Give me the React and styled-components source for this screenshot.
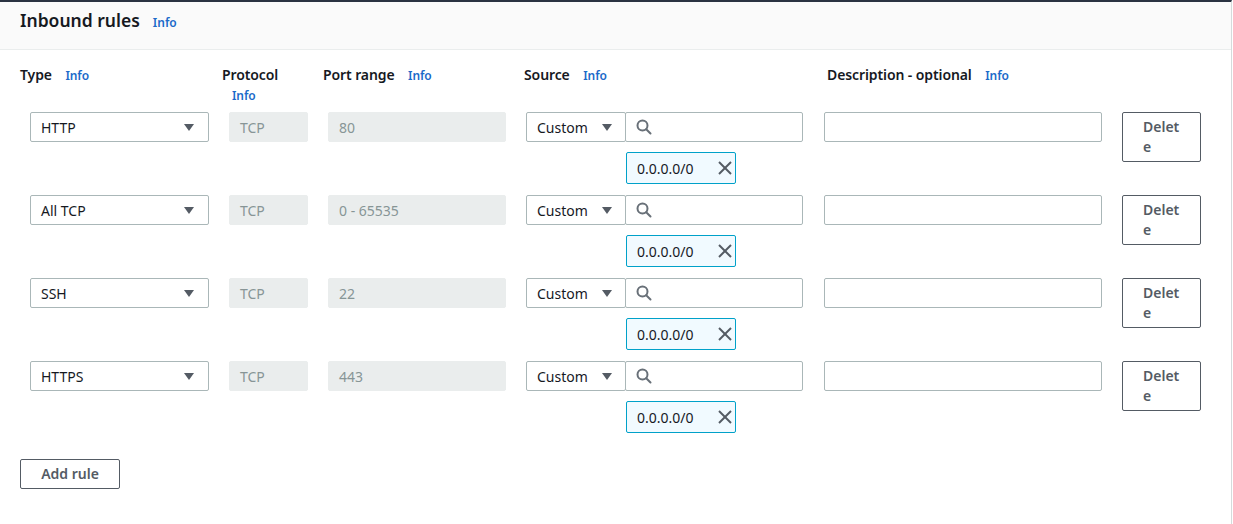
import React from "react";
import styled, { createGlobalStyle } from "styled-components";

const Global = createGlobalStyle`
  html, body { margin: 0; padding: 0; background: #fff; }
  body { font-family: "Noto Sans", "Open Sans", Arial, sans-serif; color: #16191f; }
  * { box-sizing: border-box; }
`;

const Card = styled.div`
  width: 1232px;
  min-height: 524px;
  border-top: 2px solid #2a3341;
  border-right: 1px solid #d5dbdb;
  background: #fff;
`;

const Header = styled.div`
  height: 48px;
  padding: 7px 20px 0;
  background: #fafafa;
  border-bottom: 1px solid #eaeded;
  display: flex;
  align-items: baseline;
`;

const Title = styled.h2`
  margin: 0;
  font-size: 17.5px;
  line-height: 22px;
  font-weight: 600;
  color: #16191f;
`;

const Info = styled.a`
  font-size: 12px;
  font-weight: 600;
  color: #1b6ac9;
  text-decoration: none;
  margin-left: ${(p) => p.$ml || 10}px;
`;

const Body = styled.div`
  padding: 15px 20px 0;
`;

const Grid = styled.div`
  display: grid;
  grid-template-columns: 202px 101px 201px 300px 298px 79px;
  align-items: start;
`;

const HeadRow = styled(Grid)`
  margin-bottom: 6px;
`;

const Label = styled.div`
  font-size: 14px;
  font-weight: 600;
  line-height: 20px;
  letter-spacing: -0.1px;
  padding-right: 20px;
  padding-left: ${(p) => p.$pl || 0}px;
`;

const RuleRow = styled(Grid)`
  margin-bottom: 11px;
`;

const Field = styled.div`
  height: 30px;
  width: ${(p) => p.$w}px;
  margin-left: ${(p) => p.$ml || 0}px;
  display: flex;
  align-items: center;
  padding: 0 10px;
  font-size: 14px;
  border-radius: 2px;
  border: 1px solid ${(p) => (p.$disabled ? "#eaeded" : "#aab7b8")};
  background: ${(p) => (p.$disabled ? "#eaeded" : "#fff")};
  color: ${(p) => (p.$disabled ? "#879596" : "#16191f")};
`;

const SelectBox = styled(Field)`
  justify-content: space-between;
  padding-right: ${(p) => p.$pr || 12}px;
`;

const SourceCell = styled.div`
  margin-left: 2px;
  display: flex;
  flex-direction: column;
`;

const SourceLine = styled.div`
  display: flex;
`;

const Token = styled.div`
  margin: 10px 0 0 100px;
  width: 110px;
  height: 32px;
  border: 1px solid #00a1c9;
  background: #f1faff;
  border-radius: 2px;
  display: flex;
  align-items: center;
  justify-content: space-between;
  padding: 0 2px 0 10px;
  font-size: 14px;
  color: #16191f;
`;

const Button = styled.button`
  font-family: inherit;
  font-size: 14px;
  font-weight: 600;
  line-height: 20px;
  color: #545b64;
  background: #fff;
  border: 1px solid #545b64;
  border-radius: 2px;
  padding: 4px 18px 4px 20px;
  text-align: left;
  overflow-wrap: break-word;
  word-break: break-all;
  width: ${(p) => p.$w}px;
  cursor: pointer;
`;

const AddButton = styled(Button)`
  height: 30px;
  padding: 0;
  text-align: center;
  margin-top: 15px;
`;

const Caret = () => (
  <svg width="10" height="7" viewBox="0 0 10 7">
    <polygon points="0,0 10,0 5,7" fill="#545b64" />
  </svg>
);

const SearchIcon = () => (
  <svg width="16" height="16" viewBox="0 0 16 16" fill="none" stroke="#687078" strokeWidth="2">
    <circle cx="6.5" cy="6.5" r="5" />
    <line x1="10.2" y1="10.2" x2="14.5" y2="14.5" strokeLinecap="round" />
  </svg>
);

const CloseIcon = () => (
  <svg width="16" height="16" viewBox="0 0 16 16" fill="none" stroke="#545b64" strokeWidth="2">
    <line x1="2" y1="2" x2="14" y2="14" />
    <line x1="14" y1="2" x2="2" y2="14" />
  </svg>
);

const rules = [
  { type: "HTTP", port: "80" },
  { type: "All TCP", port: "0 - 65535" },
  { type: "SSH", port: "22" },
  { type: "HTTPS", port: "443" },
];

export default function App() {
  return (
    <>
      <Global />
      <Card>
        <Header>
          <Title>Inbound rules</Title>
          <Info $ml={13}>Info</Info>
        </Header>
        <Body>
          <HeadRow>
            <Label>Type <Info>Info</Info></Label>
            <Label>Protocol <Info>Info</Info></Label>
            <Label>Port range <Info>Info</Info></Label>
            <Label>Source <Info>Info</Info></Label>
            <Label $pl={3}>Description - optional <Info>Info</Info></Label>
            <div />
          </HeadRow>
          {rules.map((r) => (
            <RuleRow key={r.type}>
              <SelectBox $w={179} $ml={10} $pr={14}>
                <span>{r.type}</span>
                <Caret />
              </SelectBox>
              <Field $w={79} $ml={7} $disabled>TCP</Field>
              <Field $w={178} $ml={5} $disabled>{r.port}</Field>
              <SourceCell>
                <SourceLine>
                  <SelectBox $w={100} $pr={13}>
                    <span>Custom</span>
                    <Caret />
                  </SelectBox>
                  <Field $w={178} $ml={-1}>
                    <SearchIcon />
                  </Field>
                </SourceLine>
                <Token>
                  <span>0.0.0.0/0</span>
                  <CloseIcon />
                </Token>
              </SourceCell>
              <Field $w={278} />
              <Button $w={79}>Delete</Button>
            </RuleRow>
          ))}
          <AddButton $w={100}>Add rule</AddButton>
        </Body>
      </Card>
    </>
  );
}
